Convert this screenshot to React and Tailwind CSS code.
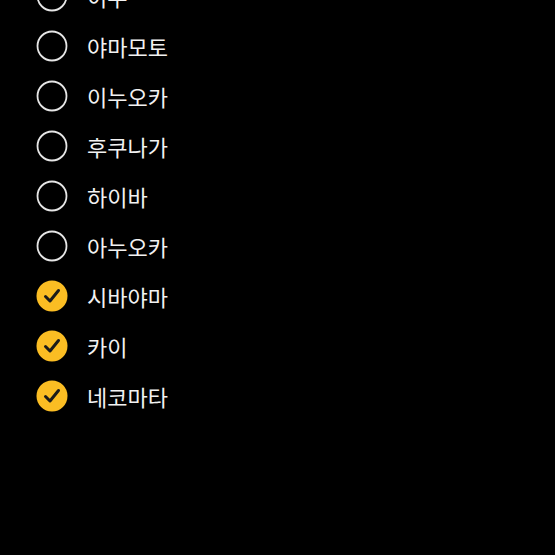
import React from 'react';

const items = [
  { name: '이누', checked: false },
  { name: '야마모토', checked: false },
  { name: '이누오카', checked: false },
  { name: '후쿠나가', checked: false },
  { name: '하이바', checked: false },
  { name: '아누오카', checked: false },
  { name: '시바야마', checked: true },
  { name: '카이', checked: true },
  { name: '네코마타', checked: true },
];

const Radio = ({ checked }) => {
  if (checked) {
    return (
      <svg width="32" height="32" viewBox="0 0 32 32">
        <circle cx="16" cy="16" r="15.5" fill="#fbbd23" />
        <path d="M9.5 16.5 L14 21 L22.5 10.5" fill="none" stroke="#1a1a1a" strokeWidth="3" strokeLinecap="round" strokeLinejoin="round" />
      </svg>
    );
  }
  return (
    <svg width="32" height="32" viewBox="0 0 32 32">
      <circle cx="16" cy="16" r="14.5" fill="none" stroke="#e6e6e6" strokeWidth="1.8" />
    </svg>
  );
};

export default function App() {
  return (
    <div className="w-[555px] h-[555px] bg-black overflow-hidden font-['Noto_Sans_CJK_KR',sans-serif]">
      <ul className="mt-[-29px] pl-9">
        {items.map((item) => (
          <li key={item.name} className="flex items-center h-[50px] gap-[19px]">
            <Radio checked={item.checked} />
            <span className="text-[22px] text-[#f2f2f2] leading-none">{item.name}</span>
          </li>
        ))}
      </ul>
    </div>
  );
}
